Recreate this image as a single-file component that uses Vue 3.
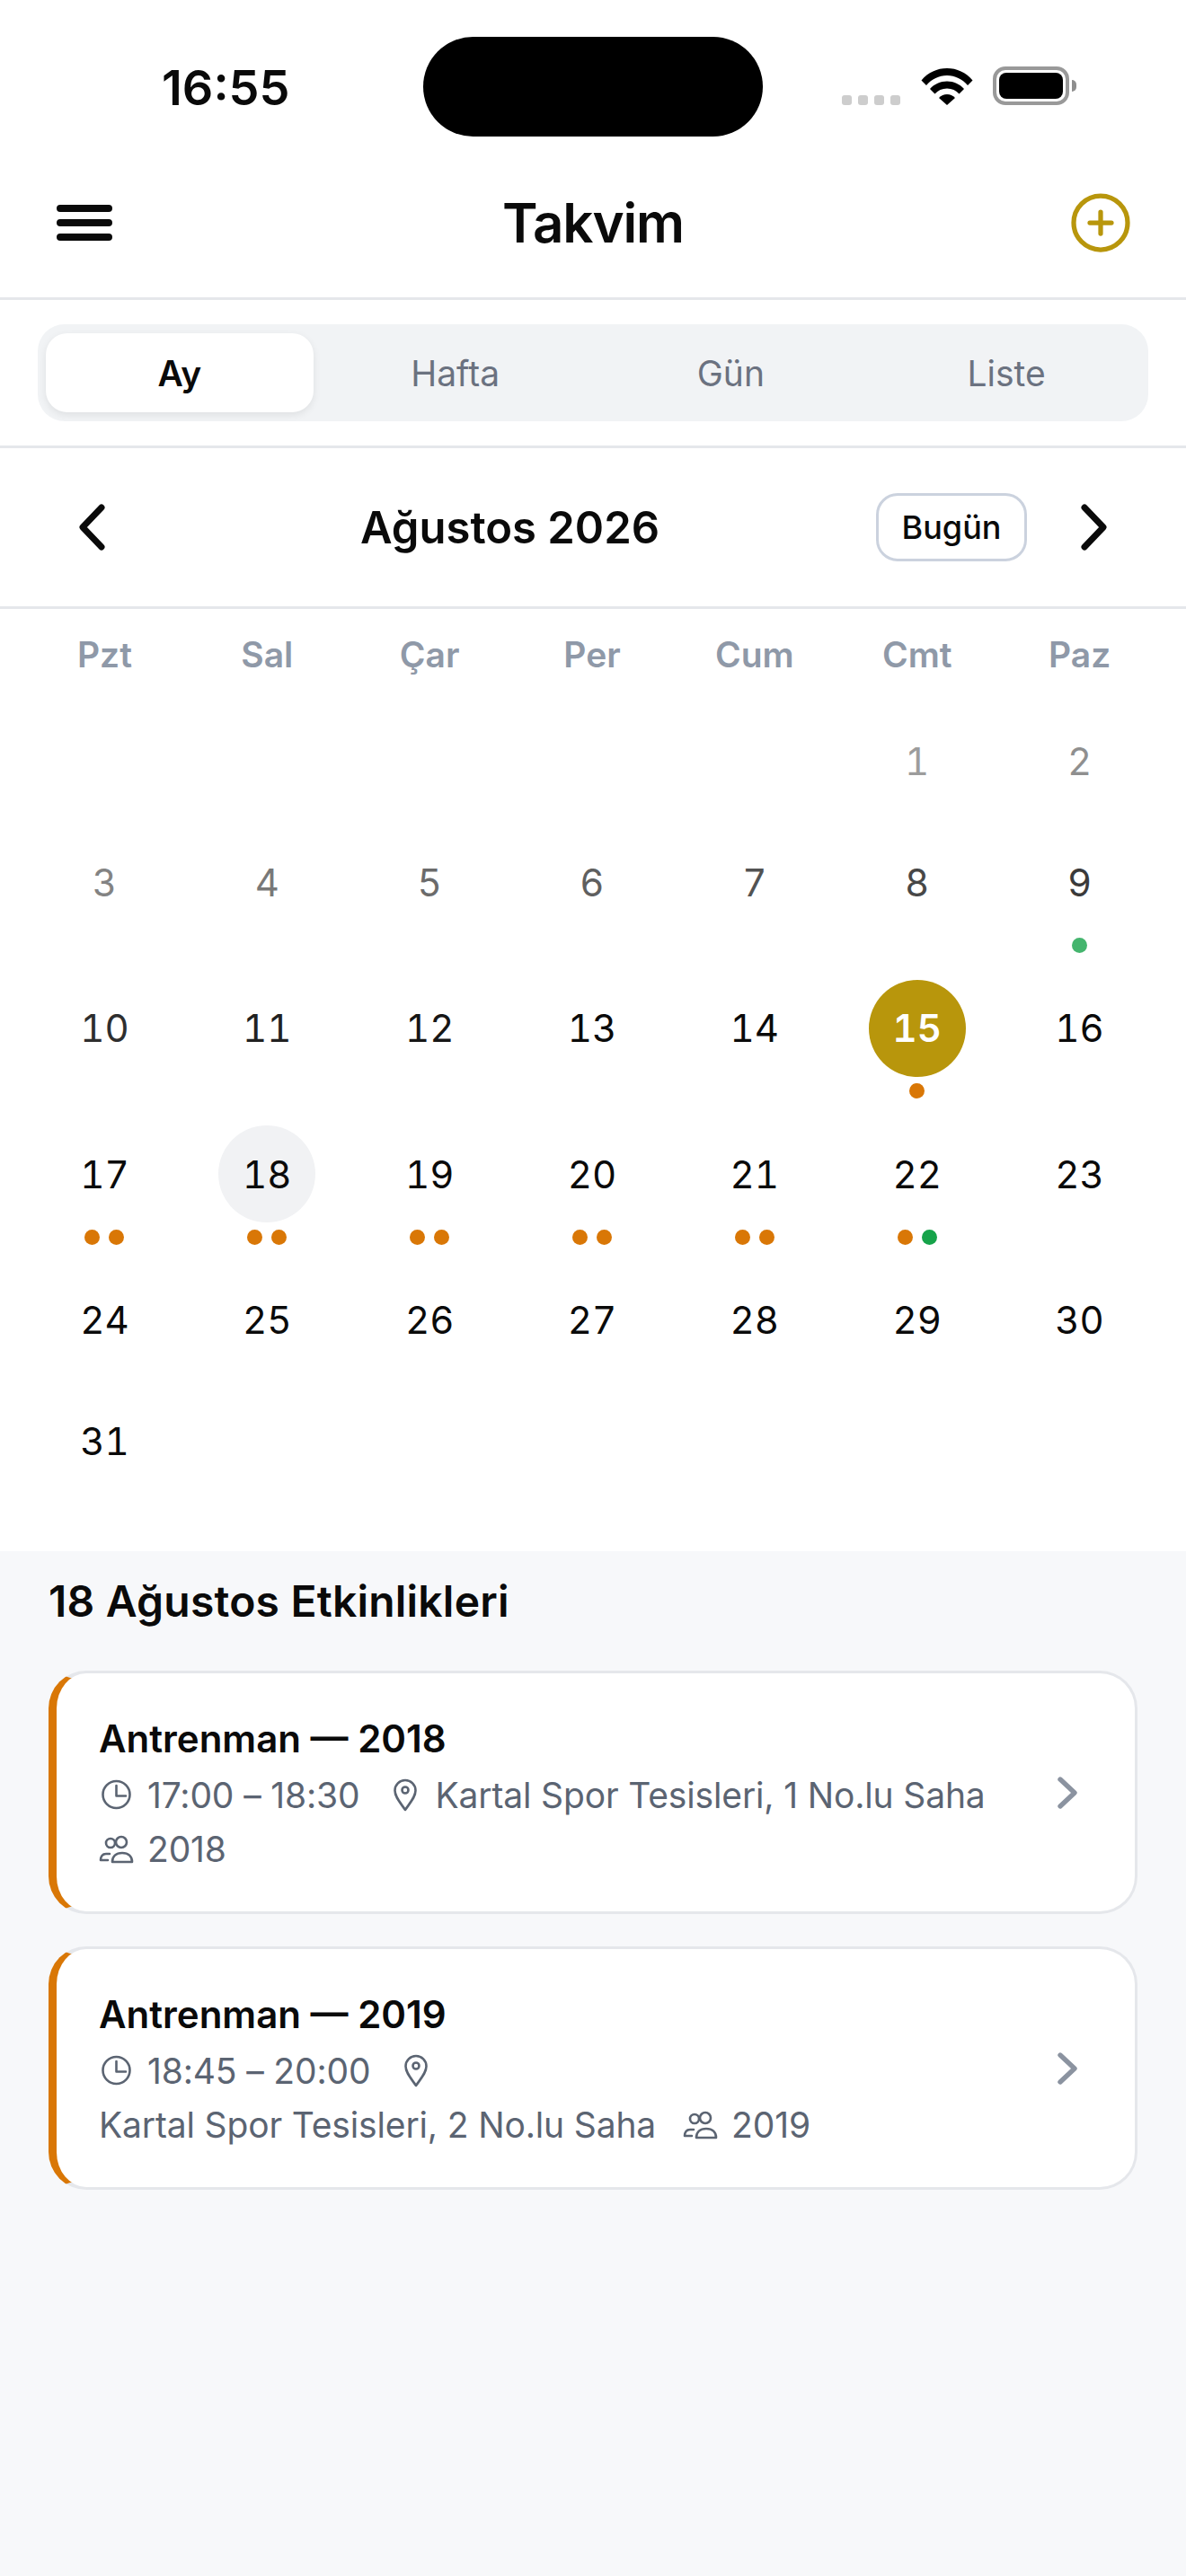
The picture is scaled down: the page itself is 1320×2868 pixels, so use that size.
<template>
  <div class="screen">
    <div class="status-bar">
      <span class="time">16:55</span>
      <div class="island"></div>
      <div class="status-icons">
        <div class="signal">
          <i v-for="n in 4" :key="n"></i>
        </div>
        <svg class="wifi" width="58" height="42" viewBox="0 0 58 42">
          <path d="M0.5 14.500C8 5.500 18 1 29 1s21 4.500 28.500 13.500l-5.500 5.500C46 13 38 9 29 9S12 13 6 20Z" />
          <path d="M10 24c5-5.500 11.500-8.500 19-8.500s14 3 19 8.500l-5.500 5.500C39 25.500 34.500 23.500 29 23.500S19 25.500 15.500 29.500Z" />
          <path d="M20 34c2.500-2.500 5.500-4 9-4s6.500 1.500 9 4l-9 8Z" />
        </svg>
        <div class="battery"><div class="battery-fill"></div></div>
        <div class="battery-cap"></div>
      </div>
    </div>

    <header class="topbar">
      <svg class="menu-icon" width="66" height="48" viewBox="0 0 66 48">
        <path d="M6 8h54M6 24h54M6 40h54" />
      </svg>
      <h1>Takvim</h1>
      <svg class="add-icon" width="72" height="72" viewBox="0 0 24 24">
        <circle cx="12" cy="12" r="10" />
        <path d="M12 8v8M8 12h8" />
      </svg>
    </header>

    <div class="tabs-wrap">
      <div class="tabs">
        <button
          v-for="tab in tabs"
          :key="tab"
          class="tab"
          :class="{ active: tab === 'Ay' }"
        >
          {{ tab }}
        </button>
      </div>
    </div>

    <div class="month-nav">
      <svg class="nav-arrow" width="36" height="54" viewBox="0 0 36 54">
        <path d="M29 5L8 27l21 22" />
      </svg>
      <div class="month-title">Ağustos 2026</div>
      <button class="today-btn">Bugün</button>
      <svg class="nav-arrow" width="36" height="54" viewBox="0 0 36 54">
        <path d="M7 5l21 22L7 49" />
      </svg>
    </div>

    <section class="calendar">
      <div class="weekdays">
        <span v-for="d in weekdays" :key="d">{{ d }}</span>
      </div>
      <div class="days">
        <div
          v-for="(cell, i) in cells"
          :key="i"
          class="cell"
          :style="cell ? { opacity: cell.opacity } : null"
        >
          <template v-if="cell">
            <div
              class="day"
              :class="{
                today: cell.day === 15,
                selected: cell.day === 18,
              }"
            >
              {{ cell.day }}
            </div>
            <div v-if="cell.dots.length" class="dots">
              <i
                v-for="(c, j) in cell.dots"
                :key="j"
                :class="c"
              ></i>
            </div>
          </template>
        </div>
      </div>
    </section>

    <section class="events">
      <h2>18 Ağustos Etkinlikleri</h2>

      <div v-for="ev in events" :key="ev.title" class="event-card">
        <div class="event-info">
          <div class="event-title">{{ ev.title }}</div>
          <div class="event-meta">
            <svg class="meta-icon" viewBox="0 0 42 42">
              <circle cx="19.500" cy="20" r="15" />
              <path d="M19.500 10v11.500H30" />
            </svg>
            <span class="meta-text">{{ ev.time }}</span>
            <svg class="meta-icon" viewBox="0 0 42 42">
              <path d="M21 37C15.500 29 9.500 22.500 9.500 15.500a11.500 11.500 0 0 1 23 0C32.500 22.500 26.500 29 21 37Z" />
              <circle cx="21" cy="15" r="3.500" />
            </svg>
            <span class="meta-text">{{ ev.place }}</span>
            <svg class="meta-icon" viewBox="0 0 42 42">
              <circle cx="13" cy="14" r="5" />
              <circle cx="25" cy="13" r="6" />
              <path d="M12 26H8C4 26 2 29 2 33h8" />
              <path d="M15 35c0-6 4-10 11-10s11 4 11 10Z" />
            </svg>
            <span class="meta-text">{{ ev.team }}</span>
          </div>
        </div>
        <svg class="event-chevron" width="60" height="60" viewBox="0 0 60 60">
          <path d="M22 15l16 15-16 15" />
        </svg>
      </div>
    </section>
  </div>
</template>

<script setup>
const tabs = ['Ay', 'Hafta', 'Gün', 'Liste']
const weekdays = ['Pzt', 'Sal', 'Çar', 'Per', 'Cum', 'Cmt', 'Paz']

const dotMap = {
  9: ['green'],
  15: ['orange'],
  17: ['orange', 'orange'],
  18: ['orange', 'orange'],
  19: ['orange', 'orange'],
  20: ['orange', 'orange'],
  21: ['orange', 'orange'],
  22: ['orange', 'green'],
}

// Ağustos 2026 cumartesi başlıyor, 5 boş hücre
const cells = [
  ...Array(5).fill(null),
  ...Array.from({ length: 31 }, (_, i) => ({
    day: i + 1,
    dots: dotMap[i + 1] ?? [],
    // ayın ilk günleri giderek koyulaşıyor
    opacity: Math.min(1, 0.4 + 0.05 * i),
  })),
]

const events = [
  {
    title: 'Antrenman — 2018',
    time: '17:00 – 18:30',
    place: 'Kartal Spor Tesisleri, 1 No.lu Saha',
    team: '2018',
  },
  {
    title: 'Antrenman — 2019',
    time: '18:45 – 20:00',
    place: 'Kartal Spor Tesisleri, 2 No.lu Saha',
    team: '2019',
  },
]
</script>

<style>
html,
body {
  margin: 0;
  background: #f7f8fa;
}
</style>

<style scoped>
.screen {
  width: 1320px;
  height: 2868px;
  overflow: hidden;
  background: #f7f8fa;
  font-family: Inter, "Noto Sans", sans-serif;
  color: #0a0a0a;
}
.status-bar {
  height: 165px;
  background: #fff;
  display: flex;
  align-items: flex-start;
  position: relative;
}
.time {
  margin-left: 180px;
  margin-top: 68px;
  font-size: 54px;
  line-height: 60px;
  font-weight: 600;
}
.island {
  position: absolute;
  left: 471px;
  top: 41px;
  width: 378px;
  height: 111px;
  border-radius: 56px;
  background: #000;
}
.status-icons {
  position: absolute;
  left: 937px;
  top: 75px;
  display: flex;
  align-items: flex-end;
  height: 42px;
}
.signal {
  display: flex;
  gap: 7px;
  margin-right: 23px;
}
.signal i {
  display: block;
  width: 11px;
  height: 11px;
  border-radius: 3px;
  background: #cdcdcd;
}
.wifi {
  margin-right: 22px;
  fill: #000;
}
.battery {
  width: 85px;
  height: 43px;
  box-sizing: border-box;
  border: 4px solid #999;
  border-radius: 14px;
  padding: 3px;
}
.battery-fill {
  width: 100%;
  height: 100%;
  background: #000;
  border-radius: 8px;
}
.battery-cap {
  width: 5px;
  height: 13px;
  margin: 0 0 15px 3px;
  background: #8e8e8e;
  border-radius: 0 5px 5px 0;
}
.topbar {
  height: 166px;
  background: #fff;
  border-bottom: 3px solid #e5e7eb;
  display: flex;
  align-items: center;
  justify-content: space-between;
  padding: 0 62px 0 61px;
  position: relative;
}
.topbar h1 {
  position: absolute;
  left: 0;
  right: 0;
  margin: 0;
  text-align: center;
  font-size: 60px;
  letter-spacing: -1.2px;
  font-weight: 600;
}
.menu-icon {
  fill: none;
  stroke: #0a0a0a;
  stroke-width: 8;
  stroke-linecap: round;
}
.add-icon {
  fill: none;
  stroke: #b8960c;
  stroke-width: 1.75;
  stroke-linecap: round;
  margin-right: -3px;
}
.tabs-wrap {
  background: #fff;
  padding: 27px 42px;
  border-bottom: 3px solid #e5e7eb;
}
.tabs {
  display: flex;
  gap: 9px;
  padding: 10px 9px;
  background: #f1f3f5;
  border-radius: 30px;
}
.tab {
  flex: 1;
  height: 88px;
  border: none;
  background: transparent;
  border-radius: 24px;
  font-family: inherit;
  font-size: 39px;
  font-weight: 400;
  color: #6b7280;
  padding: 0;
}
.tab.active {
  background: #fff;
  color: #0a0a0a;
  font-weight: 600;
  box-shadow: 0 3px 9px rgba(0, 0, 0, 0.08);
}
.month-nav {
  height: 176px;
  background: #fff;
  border-bottom: 3px solid #e5e7eb;
  display: flex;
  align-items: center;
  padding: 0 84px;
}
.month-title {
  flex: 1;
  padding-left: 40px;
  text-align: center;
  font-size: 49px;
  font-weight: 600;
}
.nav-arrow {
  flex: none;
  fill: none;
  stroke: #0a0a0a;
  stroke-width: 7;
  stroke-linecap: round;
  stroke-linejoin: round;
}
.today-btn {
  width: 168px;
  height: 76px;
  margin-right: 57px;
  background: #fff;
  border: 3px solid #cbd2de;
  border-radius: 24px;
  font-family: inherit;
  font-size: 36px;
  font-weight: 500;
  color: #0a0a0a;
  padding: 0;
}
.calendar {
  background: #fff;
  padding: 0 28px 68.500px 26px;
}
.weekdays {
  display: grid;
  grid-template-columns: repeat(7, 1fr);
  height: 115px;
  padding-top: 27px;
  box-sizing: border-box;
  text-align: center;
  font-size: 39px;
  line-height: 48px;
  font-weight: 600;
  color: #8f99a8;
}
.days {
  display: grid;
  grid-template-columns: repeat(7, 1fr);
  row-gap: 27px;
}
.cell {
  display: flex;
  flex-direction: column;
  align-items: center;
}
.day {
  width: 108px;
  height: 108px;
  border-radius: 50%;
  display: flex;
  align-items: center;
  justify-content: center;
  font-size: 42px;
  font-variant-numeric: tabular-nums;
  color: #0a0a0a;
}
.day.today {
  background: #b8960c;
  color: #fff;
  font-weight: 600;
}
.day.selected {
  background: #f1f2f4;
}
.dots {
  display: flex;
  gap: 10px;
  height: 20px;
  margin-top: 7.500px;
  align-items: flex-start;
}
.dots i {
  display: block;
  width: 17px;
  height: 17px;
  border-radius: 50%;
}
.dots .orange {
  background: #d97706;
}
.dots .green {
  background: #16a34a;
}
.events {
  padding: 0 54px;
}
.events h2 {
  margin: 27px 0 48px;
  font-size: 48px;
  letter-spacing: 0.2px;
  line-height: 58px;
  font-weight: 600;
}
.event-card {
  display: flex;
  align-items: center;
  gap: 33px;
  background: #fff;
  border: 3px solid #e5e7eb;
  border-left: 9px solid #d97706;
  border-radius: 42px;
  padding: 46px 45px 45px 47px;
  margin-bottom: 36px;
}
.event-info {
  flex: 1;
  min-width: 0;
}
.event-title {
  font-size: 42px;
  line-height: 54px;
  font-weight: 600;
  margin-bottom: 12px;
}
.event-meta {
  display: flex;
  flex-wrap: wrap;
  align-items: center;
  gap: 12px;
  color: #5b6472;
  font-size: 39px;
  letter-spacing: -0.15px;
  line-height: 48px;
}
.meta-icon {
  width: 42px;
  height: 42px;
  fill: none;
  stroke: #5b6472;
  stroke-width: 2.600;
  stroke-linecap: round;
  stroke-linejoin: round;
}
.meta-text {
  margin-right: 18px;
}
.event-chevron {
  flex: none;
  fill: none;
  stroke: #8b93a0;
  stroke-width: 5.400;
  stroke-linecap: round;
  stroke-linejoin: round;
}
</style>
